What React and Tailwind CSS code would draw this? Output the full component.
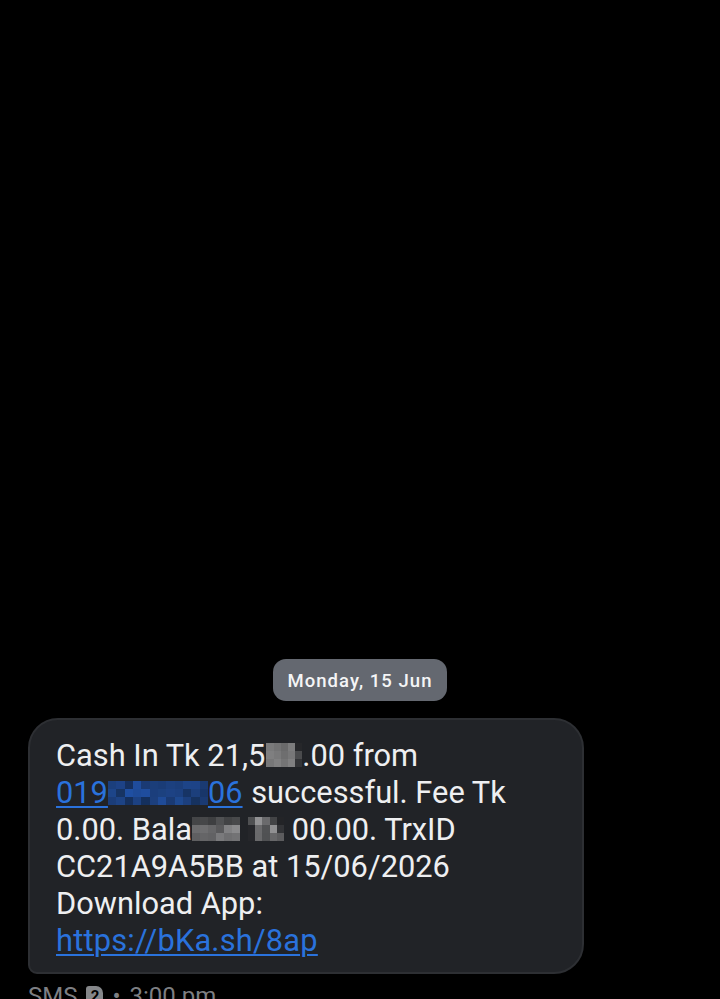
const gray1 = [
  ["#7a7a7b", "#737374", "#6a6a6b", "#7c7c7d", "#26272a"],
  ["#7f7f80", "#79797a", "#6e6e6f", "#777778", "#4a4b4d"],
  ["#777778", "#808081", "#747475", "#808081", "#333437"],
];

const blue = [
  ["#1b3f7d", "#1d4286", "#16305f", "#1f4c9c", "#1a3a74", "#1b3e7a", "#1a3c77", "#1c407f", "#1b3e7b", "#1d4488", "#1d4387", "#1a3a72"],
  ["#1d4589", "#173463", "#1f4fa2", "#1e4b99", "#1f4d9e", "#1b3e7c", "#1c417f", "#1d4284", "#1c4080", "#173465", "#1c3f7c", "#18366a"],
  ["#1b3d79", "#1d4385", "#15305e", "#1c4182", "#14305e", "#1c3f7d", "#1f4b98", "#1a3a73", "#1e4990", "#1c3f7d", "#16325f", "#1a3a73"],
];

const gray2 = [
  ["#444547", "#464749", "#3e3f41", "#505153", "#424345", "#48494b"],
  ["#6b6b6d", "#6e6e70", "#666668", "#59595b", "#818183", "#8a8a8c"],
  ["#5f5f61", "#656567", "#626264", "#7a7a7c", "#6f6f71", "#737375"],
];

const gray3 = [
  ["#4f5052", "#929294", "#6a6a6c", "#434446", "#232427"],
  ["#25262a", "#6a6a6c", "#515254", "#909092", "#333437"],
  ["#25262a", "#69696b", "#505153", "#676769", "#5c5c5e"],
];

const Mosaic = ({ rows, width, drop = 1 }) => (
  <span
    className="inline-block overflow-hidden h-[24px]"
    style={{ width, verticalAlign: -drop }}
  >
    <span
      className="grid grid-rows-3 h-full"
      style={{ gridTemplateColumns: `repeat(${rows[0].length}, 1fr)` }}
    >
      {rows.flat().map((color, i) => (
        <span key={i} className="block" style={{ backgroundColor: color }} />
      ))}
    </span>
  </span>
);

const App = () => {
  return (
    <div className="w-[720px] h-[999px] overflow-hidden bg-black font-['Roboto',sans-serif] flex flex-col">
      <div className="flex-none h-[659px]" />

      <div className="flex-none flex justify-center">
        <div className="h-[42px] w-[174px] pt-[3px] rounded-[13px] bg-[#646870] flex items-center justify-center text-[#f4f5f6] text-[18.5px] font-medium tracking-[1.05px]">
          Monday, 15 Jun
        </div>
      </div>

      <div className="flex-none mt-[17px] ml-[28px] w-[556px] h-[256px] rounded-[30px] rounded-bl-[9px] bg-[#212327] border-2 border-[#2d2f33] pl-[26px] pt-[17px] text-[30.8px] leading-[37px] text-[#eeeff1] whitespace-nowrap">
        <div className="h-[37px]">
          Cash In Tk 21,5
          <span className="inline-block w-[1px]" />
          <Mosaic rows={gray1} width={36} />
          .00 from
        </div>
        <div className="h-[37px]">
          <span className="text-[#2a72dc] underline decoration-2 underline-offset-[3px]">
            019
            <Mosaic rows={blue} width={100} drop={2} />
            06
          </span>{" "}
          <span className="ml-[1px]">successful. Fee Tk</span>
        </div>
        <div className="h-[37px]">
          0.00. Bala
          <Mosaic rows={gray2} width={48} />
          <span className="inline-block w-[8px]" />
          <Mosaic rows={gray3} width={36} />
          {" "}00.00. TrxID
        </div>
        <div className="h-[37px]">CC21A9A5BB at 15/06/2026</div>
        <div className="h-[37px]">Download App:</div>
        <div className="h-[37px]">
          <span className="text-[#2a72dc] underline decoration-2 underline-offset-[3px] tracking-[0.2px]">
            https://bKa.sh/8ap
          </span>
        </div>
      </div>

      <div className="flex-none mt-[8px] ml-[28px] flex items-center gap-[9px] text-[#7d7f83] text-[24px] leading-[28px] whitespace-nowrap">
        <span>SMS</span>
        <span className="w-[17px] h-[20px] rounded-[3px] rounded-tr-[7px] bg-[#85878a] text-black text-[15px] font-bold flex items-center justify-center">
          2
        </span>
        <span>•</span>
        <span>3:00 pm</span>
      </div>
    </div>
  );
};

export default App;
